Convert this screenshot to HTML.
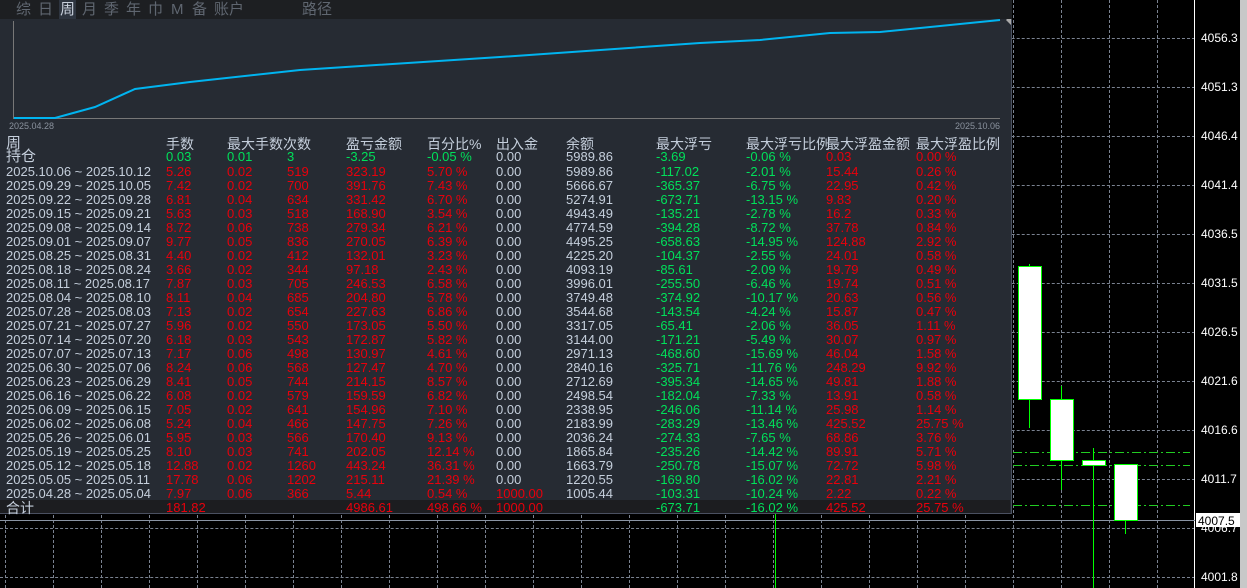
<!DOCTYPE html>
<html><head><meta charset="utf-8"><style>
*{margin:0;padding:0;box-sizing:border-box}
body{width:1247px;height:588px;background:#000;position:relative;overflow:hidden;font-family:"Liberation Sans","Noto Sans CJK SC",sans-serif}
.gv{position:absolute;top:0;width:0;height:588px;border-left:1px dashed #7a8290}
.gh{position:absolute;left:0;width:1195px;height:0;border-top:1px dashed #7a8290}
.pl{position:absolute;left:1201px;color:#fff;font-size:12px;line-height:12px}
#panel{position:absolute;left:0;top:0;width:1012px;height:514px;background:#262b33;border-right:1px solid #4a5060;border-bottom:1px solid #4a5060}
#tabs{position:absolute;left:0;top:0;width:1012px;height:19px;background:#1d1f22;color:#5f6670;font-size:15px;line-height:19px}
#tabs span{position:absolute;top:0}
.r{position:absolute;left:0;width:1010px;height:14px;font-size:13px;line-height:14px;color:#c5cfdc;white-space:nowrap}
.r span{position:absolute;top:0}
.r span:nth-child(1){left:6px}.r span:nth-child(2){left:166px}.r span:nth-child(3){left:227px}.r span:nth-child(4){left:287px}
.r span:nth-child(5){left:346px}.r span:nth-child(6){left:427px}.r span:nth-child(7){left:496px}.r span:nth-child(8){left:566px}
.r span:nth-child(9){left:656px}.r span:nth-child(10){left:746px}.r span:nth-child(11){left:826px}.r span:nth-child(12){left:916px}
.w span:nth-child(2),.w span:nth-child(3),.w span:nth-child(4),.w span:nth-child(5),.w span:nth-child(6),.w span:nth-child(11),.w span:nth-child(12){color:#e8000c}
.w span:nth-child(9),.w span:nth-child(10){color:#00e05a}
.h span{font-size:14px}
</style></head><body>
<div class="gv" style="left:1013px"></div><div class="gv" style="left:1061px"></div><div class="gv" style="left:1109px"></div><div class="gv" style="left:1157px"></div>
<div class="gv" style="left:5px"></div><div class="gv" style="left:53px"></div><div class="gv" style="left:101px"></div><div class="gv" style="left:149px"></div><div class="gv" style="left:197px"></div><div class="gv" style="left:245px"></div><div class="gv" style="left:293px"></div><div class="gv" style="left:341px"></div><div class="gv" style="left:389px"></div><div class="gv" style="left:437px"></div><div class="gv" style="left:485px"></div><div class="gv" style="left:533px"></div><div class="gv" style="left:581px"></div><div class="gv" style="left:629px"></div><div class="gv" style="left:677px"></div><div class="gv" style="left:725px"></div><div class="gv" style="left:773px"></div><div class="gv" style="left:821px"></div><div class="gv" style="left:869px"></div><div class="gv" style="left:917px"></div><div class="gv" style="left:965px"></div>
<div class="gh" style="top:38px"></div><div class="gh" style="top:87px"></div><div class="gh" style="top:136px"></div><div class="gh" style="top:185px"></div><div class="gh" style="top:234px"></div><div class="gh" style="top:283px"></div><div class="gh" style="top:332px"></div><div class="gh" style="top:381px"></div><div class="gh" style="top:430px"></div><div class="gh" style="top:479px"></div><div class="gh" style="top:528px"></div><div class="gh" style="top:577px"></div>
<div style="position:absolute;left:1194px;top:0;width:1px;height:588px;background:#fff"></div>
<div style="position:absolute;left:1240px;top:0;width:7px;height:588px;background:#c8c8c8"></div>
<div class="pl" style="top:32px">4056.3</div><div class="pl" style="top:81px">4051.3</div><div class="pl" style="top:130px">4046.4</div><div class="pl" style="top:179px">4041.4</div><div class="pl" style="top:228px">4036.5</div><div class="pl" style="top:277px">4031.5</div><div class="pl" style="top:326px">4026.5</div><div class="pl" style="top:375px">4021.6</div><div class="pl" style="top:424px">4016.6</div><div class="pl" style="top:473px">4011.7</div><div class="pl" style="top:522px">4006.7</div><div class="pl" style="top:571px">4001.8</div>
<svg style="position:absolute;left:0;top:0" width="1247" height="588">
<g stroke="#22cc22" stroke-width="1" stroke-dasharray="9,3,2,3">
<line x1="1013" y1="452.5" x2="1190" y2="452.5"/><line x1="1013" y1="465.5" x2="1190" y2="465.5"/><line x1="1013" y1="505.5" x2="1190" y2="505.5"/></g>
<line x1="0" y1="520.5" x2="1195" y2="520.5" stroke="#8a94a4"/>
<g stroke="#00ff00" stroke-width="1">
<line x1="775.5" y1="514" x2="775.5" y2="588"/>
<line x1="1029.5" y1="264" x2="1029.5" y2="428"/>
<line x1="1061.5" y1="386" x2="1061.5" y2="490"/>
<line x1="1093.5" y1="448" x2="1093.5" y2="588"/>
<line x1="1125.5" y1="520" x2="1125.5" y2="534"/>
<rect x="1018.5" y="266.5" width="23" height="133" fill="#fff"/>
<rect x="1050.5" y="399.5" width="23" height="61" fill="#fff"/>
<rect x="1082.5" y="460.5" width="23" height="5" fill="#fff"/>
<rect x="1114.5" y="464.5" width="23" height="56" fill="#fff"/>
</g>
<rect x="1196" y="513" width="44" height="14" fill="#fff"/>
<text x="1198" y="525" font-size="12" font-family="Liberation Sans" fill="#000">4007.5</text>
</svg>
<div id="panel">
<div id="tabs"><span style="left:16px">综</span><span style="left:38px">日</span><span style="left:59px;background:#2e3540;color:#c8d0dc;padding:0 1px">周</span><span style="left:82px">月</span><span style="left:104px">季</span><span style="left:126px">年</span><span style="left:148px">巾</span><span style="left:171px">M</span><span style="left:192px">备</span><span style="left:214px">账户</span><span style="left:302px">路径</span></div>
<svg style="position:absolute;left:0;top:19px" width="1012" height="115">
<line x1="13.5" y1="2" x2="13.5" y2="100" stroke="#777"/>
<line x1="13" y1="99.5" x2="1000" y2="99.5" stroke="#777"/>
<polyline fill="none" stroke="#00b4f0" stroke-width="2" points="14,99 55,99 95,88 135,70 190,63 300,51 500,38 700,24 760,21 830,14 880,13 1000,1"/>
<text x="9" y="110" font-size="9" fill="#8a929e" font-family="Liberation Sans">2025.04.28</text>
<text x="955" y="110" font-size="9" fill="#8a929e" font-family="Liberation Sans">2025.10.06</text>
<polygon points="1006,1 1011,-4 1011,6" fill="#aaa"/>
</svg>
<div class="r h" style="top:136px;line-height:16px"><span style="font-size:15px">周</span><span>手数</span><span>最大手数次数</span><span></span><span>盈亏金额</span><span>百分比%</span><span>出入金</span><span>余额</span><span>最大浮亏</span><span>最大浮亏比例</span><span>最大浮盈金额</span><span>最大浮盈比例</span></div>
<div class="r" style="top:150px"><span style="font-size:15px">持仓</span><span style="color:#00e05a">0.03</span><span style="color:#00e05a">0.01</span><span style="color:#00e05a">3</span><span style="color:#00e05a">-3.25</span><span style="color:#00e05a">-0.05 %</span><span>0.00</span><span>5989.86</span><span style="color:#00e05a">-3.69</span><span style="color:#00e05a">-0.06 %</span><span style="color:#e8000c">0.03</span><span style="color:#e8000c">0.00 %</span></div>
<div style="position:absolute;left:0;top:165px;width:1010px">
<div class="r w" style="top:0px"><span>2025.10.06 ~ 2025.10.12</span><span>5.26</span><span>0.02</span><span>519</span><span>323.19</span><span>5.70 %</span><span>0.00</span><span>5989.86</span><span>-117.02</span><span>-2.01 %</span><span>15.44</span><span>0.26 %</span></div>
<div class="r w" style="top:14px"><span>2025.09.29 ~ 2025.10.05</span><span>7.42</span><span>0.02</span><span>700</span><span>391.76</span><span>7.43 %</span><span>0.00</span><span>5666.67</span><span>-365.37</span><span>-6.75 %</span><span>22.95</span><span>0.42 %</span></div>
<div class="r w" style="top:28px"><span>2025.09.22 ~ 2025.09.28</span><span>6.81</span><span>0.04</span><span>634</span><span>331.42</span><span>6.70 %</span><span>0.00</span><span>5274.91</span><span>-673.71</span><span>-13.15 %</span><span>9.83</span><span>0.20 %</span></div>
<div class="r w" style="top:42px"><span>2025.09.15 ~ 2025.09.21</span><span>5.63</span><span>0.03</span><span>518</span><span>168.90</span><span>3.54 %</span><span>0.00</span><span>4943.49</span><span>-135.21</span><span>-2.78 %</span><span>16.2</span><span>0.33 %</span></div>
<div class="r w" style="top:56px"><span>2025.09.08 ~ 2025.09.14</span><span>8.72</span><span>0.06</span><span>738</span><span>279.34</span><span>6.21 %</span><span>0.00</span><span>4774.59</span><span>-394.28</span><span>-8.72 %</span><span>37.78</span><span>0.84 %</span></div>
<div class="r w" style="top:70px"><span>2025.09.01 ~ 2025.09.07</span><span>9.77</span><span>0.05</span><span>836</span><span>270.05</span><span>6.39 %</span><span>0.00</span><span>4495.25</span><span>-658.63</span><span>-14.95 %</span><span>124.88</span><span>2.92 %</span></div>
<div class="r w" style="top:84px"><span>2025.08.25 ~ 2025.08.31</span><span>4.40</span><span>0.02</span><span>412</span><span>132.01</span><span>3.23 %</span><span>0.00</span><span>4225.20</span><span>-104.37</span><span>-2.55 %</span><span>24.01</span><span>0.58 %</span></div>
<div class="r w" style="top:98px"><span>2025.08.18 ~ 2025.08.24</span><span>3.66</span><span>0.02</span><span>344</span><span>97.18</span><span>2.43 %</span><span>0.00</span><span>4093.19</span><span>-85.61</span><span>-2.09 %</span><span>19.79</span><span>0.49 %</span></div>
<div class="r w" style="top:112px"><span>2025.08.11 ~ 2025.08.17</span><span>7.87</span><span>0.03</span><span>705</span><span>246.53</span><span>6.58 %</span><span>0.00</span><span>3996.01</span><span>-255.50</span><span>-6.46 %</span><span>19.74</span><span>0.51 %</span></div>
<div class="r w" style="top:126px"><span>2025.08.04 ~ 2025.08.10</span><span>8.11</span><span>0.04</span><span>685</span><span>204.80</span><span>5.78 %</span><span>0.00</span><span>3749.48</span><span>-374.92</span><span>-10.17 %</span><span>20.63</span><span>0.56 %</span></div>
<div class="r w" style="top:140px"><span>2025.07.28 ~ 2025.08.03</span><span>7.13</span><span>0.02</span><span>654</span><span>227.63</span><span>6.86 %</span><span>0.00</span><span>3544.68</span><span>-143.54</span><span>-4.24 %</span><span>15.87</span><span>0.47 %</span></div>
<div class="r w" style="top:154px"><span>2025.07.21 ~ 2025.07.27</span><span>5.96</span><span>0.02</span><span>550</span><span>173.05</span><span>5.50 %</span><span>0.00</span><span>3317.05</span><span>-65.41</span><span>-2.06 %</span><span>36.05</span><span>1.11 %</span></div>
<div class="r w" style="top:168px"><span>2025.07.14 ~ 2025.07.20</span><span>6.18</span><span>0.03</span><span>543</span><span>172.87</span><span>5.82 %</span><span>0.00</span><span>3144.00</span><span>-171.21</span><span>-5.49 %</span><span>30.07</span><span>0.97 %</span></div>
<div class="r w" style="top:182px"><span>2025.07.07 ~ 2025.07.13</span><span>7.17</span><span>0.06</span><span>498</span><span>130.97</span><span>4.61 %</span><span>0.00</span><span>2971.13</span><span>-468.60</span><span>-15.69 %</span><span>46.04</span><span>1.58 %</span></div>
<div class="r w" style="top:196px"><span>2025.06.30 ~ 2025.07.06</span><span>8.24</span><span>0.06</span><span>568</span><span>127.47</span><span>4.70 %</span><span>0.00</span><span>2840.16</span><span>-325.71</span><span>-11.76 %</span><span>248.29</span><span>9.92 %</span></div>
<div class="r w" style="top:210px"><span>2025.06.23 ~ 2025.06.29</span><span>8.41</span><span>0.05</span><span>744</span><span>214.15</span><span>8.57 %</span><span>0.00</span><span>2712.69</span><span>-395.34</span><span>-14.65 %</span><span>49.81</span><span>1.88 %</span></div>
<div class="r w" style="top:224px"><span>2025.06.16 ~ 2025.06.22</span><span>6.08</span><span>0.02</span><span>579</span><span>159.59</span><span>6.82 %</span><span>0.00</span><span>2498.54</span><span>-182.04</span><span>-7.33 %</span><span>13.91</span><span>0.58 %</span></div>
<div class="r w" style="top:238px"><span>2025.06.09 ~ 2025.06.15</span><span>7.05</span><span>0.02</span><span>641</span><span>154.96</span><span>7.10 %</span><span>0.00</span><span>2338.95</span><span>-246.06</span><span>-11.14 %</span><span>25.98</span><span>1.14 %</span></div>
<div class="r w" style="top:252px"><span>2025.06.02 ~ 2025.06.08</span><span>5.24</span><span>0.04</span><span>466</span><span>147.75</span><span>7.26 %</span><span>0.00</span><span>2183.99</span><span>-283.29</span><span>-13.46 %</span><span>425.52</span><span>25.75 %</span></div>
<div class="r w" style="top:266px"><span>2025.05.26 ~ 2025.06.01</span><span>5.95</span><span>0.03</span><span>566</span><span>170.40</span><span>9.13 %</span><span>0.00</span><span>2036.24</span><span>-274.33</span><span>-7.65 %</span><span>68.86</span><span>3.76 %</span></div>
<div class="r w" style="top:280px"><span>2025.05.19 ~ 2025.05.25</span><span>8.10</span><span>0.03</span><span>741</span><span>202.05</span><span>12.14 %</span><span>0.00</span><span>1865.84</span><span>-235.26</span><span>-14.42 %</span><span>89.91</span><span>5.71 %</span></div>
<div class="r w" style="top:294px"><span>2025.05.12 ~ 2025.05.18</span><span>12.88</span><span>0.02</span><span>1260</span><span>443.24</span><span>36.31 %</span><span>0.00</span><span>1663.79</span><span>-250.78</span><span>-15.07 %</span><span>72.72</span><span>5.98 %</span></div>
<div class="r w" style="top:308px"><span>2025.05.05 ~ 2025.05.11</span><span>17.78</span><span>0.06</span><span>1202</span><span>215.11</span><span>21.39 %</span><span>0.00</span><span>1220.55</span><span>-169.80</span><span>-16.02 %</span><span>22.81</span><span>2.21 %</span></div>
<div class="r w" style="top:322px"><span>2025.04.28 ~ 2025.05.04</span><span>7.97</span><span>0.06</span><span>366</span><span>5.44</span><span>0.54 %</span><span style="color:#e8000c">1000.00</span><span>1005.44</span><span>-103.31</span><span>-10.24 %</span><span>2.22</span><span>0.22 %</span></div>
</div>
<div style="position:absolute;left:0;top:500px;width:1010px;height:13px;background:#1c1d20"></div>
<div class="r w" style="top:501px"><span style="font-size:14px">合计</span><span>181.82</span><span></span><span></span><span>4986.61</span><span>498.66 %</span><span style="color:#e8000c">1000.00</span><span></span><span>-673.71</span><span>-16.02 %</span><span>425.52</span><span>25.75 %</span></div>
</div>
</body></html>
